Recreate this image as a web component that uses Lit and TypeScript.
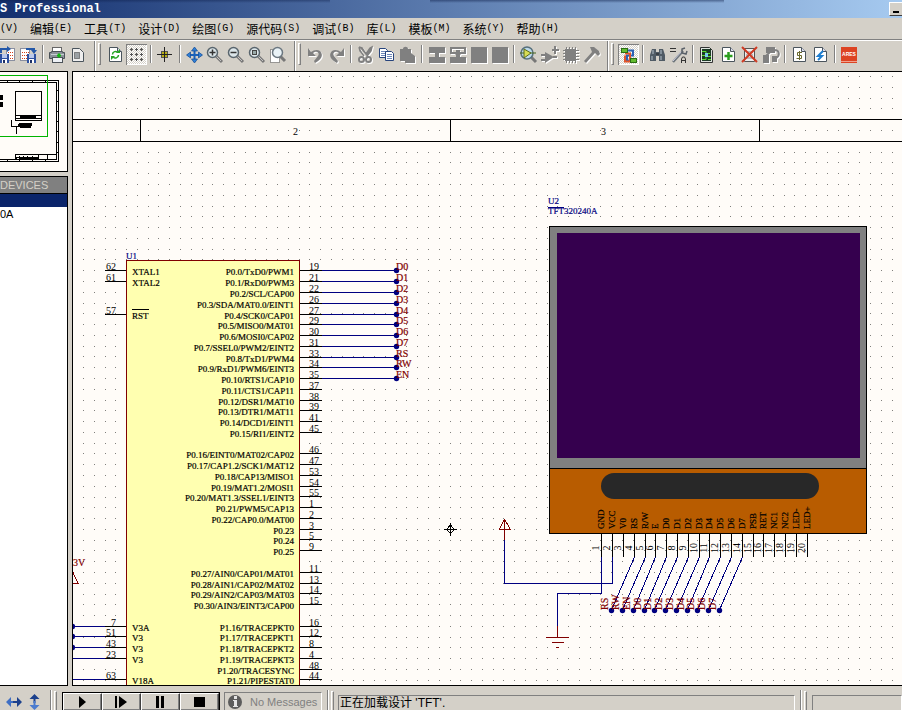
import { LitElement, html, svg, css, nothing } from "lit";
import { customElement } from "lit/decorators.js";

/* ---------- icon artwork, drawn on a 21 x 21 cell ---------- */
const floppy = (x: number, y: number) => svg`
  <rect x=${x} y=${y} width="9" height="9" fill="#2b4fa0"/>
  <rect x=${x + 2} y=${y} width="5" height="4" fill="#b9c8ea"/>
  <rect x=${x + 2} y=${y + 5} width="5" height="4" fill="#fff"/>
  <rect x=${x + 3} y=${y + 6} width="2" height="3" fill="#1d2f66"/>`;

const page = svg`<path d="M4.500 3.500h8l4 4v10h-12z" fill="#fff" stroke="#4a545c"/><path d="M12.500 3.500v4h4" fill="#dde" stroke="#4a545c"/>`;

const lens = (inner: unknown) => svg`
  <path d="M11 12l6 6" stroke="#777" stroke-width="3"/><path d="M11 12l5 5" stroke="#c4c4c4"/>
  <circle cx="7.500" cy="8.500" r="5" fill="#dce6ea" stroke="#59656d" stroke-width="1.500"/>${inner}`;

const icons: Record<string, unknown> = {
  importSection: svg`<rect x="9.500" y="4.500" width="8" height="12" fill="#fff" stroke="#8a8fa0"/>
    <path d="M11 8.500h6M11 11.500h6M11 14.500h6" stroke="#d4401c" stroke-dasharray="1 1"/>
    ${floppy(3, 10)}<path d="M4 9V5h7" fill="none" stroke="#2458a8" stroke-width="2"/><path d="M10 2l4 3-4 3z" fill="#2458a8"/>`,
  exportSection: svg`<rect x="2.500" y="4.500" width="9" height="12" fill="#fff" stroke="#8a8fa0"/>
    <path d="M4 8.500h7M4 11.500h7M4 14.500h7" stroke="#d4401c" stroke-dasharray="1 1"/>
    ${floppy(9, 10)}<path d="M8 5h8v2" fill="none" stroke="#2458a8" stroke-width="2"/><path d="M13 6h6l-3 4z" fill="#2458a8"/>`,
  print: svg`<rect x="5.500" y="3.500" width="9" height="6" fill="#fff" stroke="#666"/>
    <path d="M2.500 8.500h2v-1h11v1h2v6h-15z" fill="#8b9299" stroke="#4b5258"/><path d="M4 10.500h13" stroke="#c8ced4"/>
    <rect x="5.500" y="13.500" width="10" height="5" fill="#eef1f5" stroke="#4b5258"/><path d="M10 11.500h4M12 9.500v4" stroke="#13b513" stroke-width="2"/>`,
  area: svg`<path d="M4.500 4.500h7l4 4v9h-11z" fill="#eee" stroke="#4a545c"/><rect x="6.500" y="8.500" width="5" height="6" fill="#9aa0a4" stroke="#333" stroke-dasharray="1 1"/>`,
  redraw: svg`${page}<path d="M7.500 10.500c0-3 4-4 5-2M13.500 11c0 3-4 4-5 2" fill="none" stroke="#25a322" stroke-width="1.500"/><path d="M11 9h4V5zM10 12H6v4z" fill="#25a322"/>`,
  grid: svg`<path d="M4 5.500h3M9 5.500h3M14 5.500h3M4 10.500h3M9 10.500h3M14 10.500h3M4 15.500h3M9 15.500h3M14 15.500h3M5.500 4v3M10.500 4v3M15.500 4v3M5.500 9v3M10.500 9v3M15.500 9v3M5.500 14v3M10.500 14v3M15.500 14v3" stroke="#555"/>`,
  origin: svg`<path d="M9.500 3v15M2 10.500h15" stroke="#222"/><rect x="6.500" y="7.500" width="6" height="6" fill="#b9ae17" stroke="#555"/><path d="M9.500 7v7M6 10.500h7" stroke="#222"/>`,
  pan: svg`<path d="M10.500 4v14M3.500 11h14" stroke="#1b61b8" stroke-width="2"/><path d="M10.500 3l3 4h-6zM10.500 19l3-4h-6zM2.500 11l4-3v6zM18.500 11l-4-3v6z" fill="#2f7fd6" stroke="#154b92" stroke-width=".7"/>`,
  zoomIn: lens(svg`<path d="M4.500 8.500h6M7.500 5.500v6" stroke="#333" stroke-width="1.500"/>`),
  zoomOut: lens(svg`<path d="M4.500 8.500h6" stroke="#333" stroke-width="1.500"/>`),
  zoomAll: lens(svg`<rect x="5.500" y="6.500" width="4" height="4" fill="#9aa" stroke="#444"/>`),
  zoomArea: svg`<rect x="2.500" y="5.500" width="9" height="13" fill="#fff" stroke="#444" stroke-dasharray="1 1"/>
    <path d="M12 12l5 5" stroke="#777" stroke-width="3"/><circle cx="9.500" cy="8.500" r="5" fill="#e9f2f6" stroke="#6b7780" stroke-width="1.500"/>`,
  undo: svg`<path d="M3 4v8h8l-3-3c4-3 7 0 5 3l-4 5 1 2c8-4 8-9 5-12-3-2-6-1-9 1z" fill="#808080"/>`,
  redo: svg`<path d="M18 4v8h-8l3-3c-4-3-7 0-5 3l4 5-1 2C3 15 3 10 6 7c3-2 6-1 9 1z" fill="#808080"/>`,
  cut: svg`<path d="M4 3l3 1 4 6 4-6 2-1-1 4-4 5 1 1M4 3l1 4 4 5" fill="#808080" stroke="#808080" stroke-width="1.500"/>
    <circle cx="6.500" cy="15.500" r="2.500" fill="none" stroke="#808080" stroke-width="2"/><circle cx="13.500" cy="15.500" r="2.500" fill="none" stroke="#808080" stroke-width="2"/>`,
  copy: svg`<path d="M3.500 4.500h6l2 2v7h-8z" fill="#fff" stroke="#27447c"/><path d="M5 7.500h5M5 9.500h5M5 11.500h4" stroke="#6d87b8"/>
    <path d="M9.500 7.500h6l2 2v7h-8z" fill="#fff" stroke="#27447c"/><path d="M11 10.500h5M11 12.500h5M11 14.500h5" stroke="#6d87b8"/>`,
  paste: svg`<path d="M3 5h3c0-3 5-3 5 0h3v4l4 3v7H8v-2H3z" fill="#808080"/>`,
  blockCopy: svg`<path d="M3 3h16v6H3zM9 9h4v4H9zM3 13h16v6H3z" fill="#808080"/>`,
  blockMove: svg`<path d="M4 4h14v5H4z" fill="none" stroke="#808080" stroke-width="2"/><path d="M9 6h4v8H9zM3 13h16v6H3zM7 9h8l-4 4z" fill="#808080"/>`,
  block: svg`<rect x="3" y="3" width="16" height="16" fill="#808080"/>`,
  pick: svg`<path d="M13 13l5 5" stroke="#777" stroke-width="3"/><circle cx="9" cy="9" r="6" fill="#bcd9ea" stroke="#57707d" stroke-width="1.500"/>
    <path d="M2 9h16" stroke="#44651c"/><path d="M6 5l7 4-7 5z" fill="#d8dd55" stroke="#5b6b1b"/>`,
  makeDevice: svg`<path d="M6 8l9 5-9 6zM2 10h4v2H2zM2 15h4v2H2zM14 12h4v2h-4zM13 5h7v2h-7zM15 2h2v8h-2z" fill="#808080"/>`,
  packaging: svg`<path d="M5 5h11v12H5z" fill="#808080"/><path d="M3 6.500h16M3 9.500h16M3 12.500h16M3 15.500h16" stroke="#808080"/><path d="M6.500 3v16M9.500 3v16M12.500 3v16M15.500 3v16" stroke="#808080"/>`,
  decompose: svg`<path d="M9 3h4l5 4 1 3-2 2-3-3L5 19l-2-2 8-9z" fill="#808080"/>`,
  wires: svg`<path d="M8 6.500h7v5h-6v5h5" fill="none" stroke="#2b62b5" stroke-width="2"/><path d="M7 9.500h5v8H7v-6" fill="none" stroke="#e2552a" stroke-width="2"/>
    <rect x="3.500" y="4.500" width="6" height="4" fill="#63bd30" stroke="#2b6d14"/><rect x="12.500" y="14.500" width="6" height="4" fill="#63bd30" stroke="#2b6d14"/>`,
  search: svg`<path d="M5 5h4v3h3V5h4l2 6v6h-6v-5H9v5H3v-6z" fill="#505b65"/><path d="M6 6v4M14 6v4M5 12v4M14 12v4" stroke="#b6c3cd"/><path d="M9 10h3" stroke="#222"/>`,
  property: svg`<path d="M2 4.500h6M2 7.500h6" stroke="#333"/><path d="M5 18L15 7" stroke="#6e767c" stroke-width="2.500"/><path d="M5 17l9-10" stroke="#ccd"/>
    <path d="M17 4l-3 1v4l4 1 1-3" fill="none" stroke="#596068" stroke-width="1.500"/><path d="M13.500 19v-4l1-2h2l1 2v4M13 16.500h5" fill="none" stroke="#333"/>`,
  explorer: svg`<path d="M3.500 3.500h9l3 3v12h-12z" fill="#dfe5e0" stroke="#333"/><rect x="5" y="5" width="9" height="12" fill="#1c3a26"/><path d="M5 7.500h4v2h4M5 11.500h3M11 12.500h3M5 15.500h4v-2M11 15.500h3" fill="none" stroke="#5be02d"/><rect x="8" y="9" width="3" height="4" fill="#7ac8ee"/>`,
  newSheet: svg`${page}<path d="M10.500 8v8M6.500 12h8" stroke="#2b9e1f" stroke-width="2.500"/>`,
  removeSheet: svg`<path d="M5.500 4.500h10v13h-10z" fill="#eee" stroke="#555"/><path d="M7 8h7M7 11h7M7 14h7" stroke="#888"/><path d="M3 3l15 15M18 3L3 18" stroke="#cf3a23" stroke-width="2"/>`,
  exitParent: svg`<path d="M6 3h9v6H6zM3 11h6v8H3zM12 12h5v6h-5z" fill="#808080"/><path d="M6 12l5-5M14 6c6 0 6 6 2 8" fill="none" stroke="#808080" stroke-width="2"/>`,
  bom: svg`${page}<path d="M13 8.500H8.500v3h4v3H7.500M10.500 7v9" fill="none" stroke="#6b6a2e"/>`,
  erc: svg`${page}<path d="M13 7l-5 5h4l-4 4" fill="none" stroke="#1e7ed0" stroke-width="2"/>`,
  ares: svg`<rect x="2" y="3" width="16" height="16" fill="#dd4423"/><path d="M2 17.500h16" stroke="#f0a28f"/><text x="10" y="12" class="ares">ARES</text>`,
  flipH: svg`<path d="M3 11l5-5v4h4v2H8v4z" fill="#3f6fc4"/><path d="M19 11l-5-5v4h-4v2h4v4z" fill="#1c408c"/>`,
  flipV: svg`<path d="M10.500 3l5 5h-4v4h-2V8h-4z" fill="#1c408c"/><path d="M10.500 19l5-5h-4v-4h-2v4h-4z" fill="#4c7ccf"/>`,
  play: svg`<path d="M7 4v12l7-6z"/>`,
  step: svg`<path d="M4 4h2v12H4zM8 4v12l8-6z"/>`,
  pause: svg`<path d="M6 4h3v12H6zM11 4h3v12h-3z"/>`,
  stop: svg`<path d="M5 5h11v10H5z"/>`,
  info: svg`<circle cx="10" cy="10" r="7" fill="#5c5c5c"/><path d="M9 4h3v3H9zM8 8h4v6h1v1H8v-1h1V9H8z" fill="#e4e4e4"/>`,
};
const icon = (name: string) => html`<svg class="icon" viewBox="0 0 21 21" aria-hidden="true">${icons[name]}</svg>`;

type Tool = [name: string, label: string, state?: "off" | "on"];
const bands: Tool[][][] = [
  [
    [["importSection", "Import section"], ["exportSection", "Export section"]],
    [["print", "Print"], ["area", "Mark output area"]],
  ],
  [
    [["redraw", "Redraw"], ["grid", "Toggle grid", "on"]],
    [["origin", "Origin"]],
    [["pan", "Pan"], ["zoomIn", "Zoom in"], ["zoomOut", "Zoom out"], ["zoomAll", "Zoom all"], ["zoomArea", "Zoom area"]],
  ],
  [
    [["undo", "Undo", "off"], ["redo", "Redo", "off"]],
    [["cut", "Cut", "off"], ["copy", "Copy"], ["paste", "Paste", "off"]],
    [["blockCopy", "Block copy", "off"], ["blockMove", "Block move", "off"], ["block", "Block rotate", "off"], ["block", "Block delete", "off"]],
    [["pick", "Pick device"], ["makeDevice", "Make device", "off"], ["packaging", "Packaging tool", "off"], ["decompose", "Decompose", "off"]],
  ],
  [
    [["wires", "Wire autorouter", "on"]],
    [["search", "Search and tag"], ["property", "Property assignment"]],
    [["explorer", "Design explorer"], ["newSheet", "New sheet"], ["removeSheet", "Remove sheet"], ["exitParent", "Exit to parent", "off"]],
    [["bom", "Bill of materials"], ["erc", "Electrical rules check"]],
    [["ares", "Netlist to ARES"]],
  ],
];

const menus = [["", "V"], ["编辑", "E"], ["工具", "T"], ["设计", "D"], ["绘图", "G"], ["源代码", "S"], ["调试", "B"], ["库", "L"], ["模板", "M"], ["系统", "Y"], ["帮助", "H"]];

/* ---------- schematic data, in sheet coordinates ---------- */
const PITCH = 10.78;
const gridX = (i: number) => Math.floor(83.5 + PITCH * i);
const gridY = (i: number) => Math.floor(76.65 + PITCH * i);
const pinY = (row: number) => Math.floor(270.97 + 10.76 * row);
const FIRST_NET_COLUMN = 46;

type Pin = [row: number, num: string, name: string, net?: string];
const rightPins: Pin[] = [
  [0, "19", "P0.0/TxD0/PWM1", "D0"], [1, "21", "P0.1/RxD0/PWM3", "D1"], [2, "22", "P0.2/SCL/CAP00", "D2"],
  [3, "26", "P0.3/SDA/MAT0.0/EINT1", "D3"], [4, "27", "P0.4/SCK0/CAP01", "D4"], [5, "29", "P0.5/MISO0/MAT01", "D5"],
  [6, "30", "P0.6/MOSI0/CAP02", "D6"], [7, "31", "P0.7/SSEL0/PWM2/EINT2", "D7"], [8, "33", "P0.8/TxD1/PWM4", "RS"],
  [9, "34", "P0.9/RxD1/PWM6/EINT3", "RW"], [10, "35", "P0.10/RTS1/CAP10", "EN"], [11, "37", "P0.11/CTS1/CAP11"],
  [12, "38", "P0.12/DSR1/MAT10"], [13, "39", "P0.13/DTR1/MAT11"], [14, "41", "P0.14/DCD1/EINT1"], [15, "45", "P0.15/RI1/EINT2"],
  [17, "46", "P0.16/EINT0/MAT02/CAP02"], [18, "47", "P0.17/CAP1.2/SCK1/MAT12"], [19, "53", "P0.18/CAP13/MISO1"],
  [20, "54", "P0.19/MAT1.2/MOSI1"], [21, "55", "P0.20/MAT1.3/SSEL1/EINT3"], [22, "1", "P0.21/PWM5/CAP13"],
  [23, "2", "P0.22/CAP0.0/MAT00"], [24, "3", "P0.23"], [25, "5", "P0.24"], [26, "9", "P0.25"],
  [28, "11", "P0.27/AIN0/CAP01/MAT01"], [29, "13", "P0.28/AIN1/CAP02/MAT02"], [30, "14", "P0.29/AIN2/CAP03/MAT03"],
  [31, "15", "P0.30/AIN3/EINT3/CAP00"], [33, "16", "P1.16/TRACEPKT0"], [34, "12", "P1.17/TRACEPKT1"],
  [35, "8", "P1.18/TRACEPKT2"], [36, "4", "P1.19/TRACEPKT3"], [37, "48", "P1.20/TRACESYNC"], [38, "44", "P1.21/PIPESTAT0"],
];
const leftPins: Pin[] = [
  [0, "62", "XTAL1"], [1, "61", "XTAL2"], [4, "57", "RST"],
  [33, "7", "V3A", "dot"], [34, "51", "V3", "dot"], [35, "43", "V3", "dot"], [36, "23", "V3", "wire"], [38, "63", "V18A", "wire"],
];
const lcdPins: [x: number, name: string, net?: string][] = [
  [601, "GND"], [612, "VCC"], [623, "V0"], [634, "RS", "RS"], [645, "R/W", "RW"], [655, "E", "EN"], [666, "D0", "D0"],
  [677, "D1", "D1"], [688, "D2", "D2"], [699, "D3", "D3"], [709, "D4", "D4"], [720, "D5", "D5"], [731, "D6", "D6"],
  [742, "D7", "D7"], [753, "PSB"], [763, "RET"], [774, "NC1"], [785, "NC2"], [796, "LED-"], [807, "LED+"],
];

@customElement("schematic-sheet")
export class SchematicSheet extends LitElement {
  static styles = css`
    :host { display: block; overflow: hidden; background: #fffcf8; }
    svg { display: block; width: 100%; height: 100%; }
    .line { stroke: #000; fill: none; shape-rendering: crispEdges; }
    .wire { stroke: #000080; fill: none; shape-rendering: crispEdges; }
    .term { stroke: #800000; fill: none; shape-rendering: crispEdges; }
    .node { fill: #000080; }
    .grid { stroke: #80807c; shape-rendering: crispEdges; }
    .name { font: 9px "Liberation Serif", serif; stroke: #000; stroke-width: .2; }
    .num { font: 10px "Liberation Serif", serif; }
    .ref { font: 9px "Liberation Serif", serif; fill: #000080; stroke: #000080; stroke-width: .2; }
    .net { font: 10px "Liberation Serif", serif; fill: #800000; stroke: #800000; stroke-width: .2; }
    .end { text-anchor: end; }
    .mid { text-anchor: middle; }
    .chip { fill: #ffffb0; stroke: #800000; shape-rendering: crispEdges; }
    .bezel { fill: #808080; stroke: #000; shape-rendering: crispEdges; }
    .glass { fill: #35004e; }
    .board { fill: #b85c00; stroke: #000; shape-rendering: crispEdges; }
    .slot { fill: #282828; }
  `;

  private grid() {
    let d = "";
    for (let r = 0; r < 130; r++) {
      for (let c = 0; c < 200; c++) d += `M${gridX(c)} ${gridY(r)}.5h1`;
    }
    return svg`<path class="grid" d=${d}/>`;
  }

  private rightPin([row, num, name, net]: Pin) {
    const y = pinY(row);
    return svg`
      <path class="line" d="M300 ${y}.5h22"/>
      <text class="num" x="309" y=${y}>${num}</text>
      <text class="name end" x="294" y=${y + 5}>${name}</text>
      ${net ? svg`<path class="wire" d="M322 ${y}.5h74"/><circle class="node" cx="396.500" cy=${y + 0.5} r="2.700"/>
        <text class="net" x="396" y=${y}>${net}</text>` : nothing}`;
  }

  private leftPin([row, num, name, net]: Pin) {
    const y = pinY(row);
    return svg`
      <path class="line" d="M105 ${y}.5h21"/>
      <text class="num end" x="116" y=${y}>${num}</text>
      <text class="name" x="132" y=${y + 5}>${name}</text>
      ${name === "RST" ? svg`<path class="line" d="M132 ${y - 5}.5h17"/>` : nothing}
      ${net ? svg`<path class="wire" d="M73 ${y}.5h32"/>` : nothing}
      ${net === "dot" ? svg`<circle class="node" cx="72.500" cy=${y + 0.5} r="2.700"/>` : nothing}`;
  }

  private lcdPin([x, name, net]: [number, string, string?], i: number) {
    const nx = gridX(FIRST_NET_COLUMN + i);
    return svg`
      <path class="line" d="M${x}.5 534v23"/>
      <text class="name" transform="translate(${x + 3} 529) rotate(-90)">${name}</text>
      <text class="num mid" transform="translate(${x - 2} 548) rotate(-90)">${i + 1}</text>
      ${net ? svg`<path class="wire" d="M${x}.5 557L${nx}.5 610"/><circle class="node" cx=${nx + 0.5} cy="610.500" r="2.700"/>
        <text class="net" transform="translate(${nx - 3} 610) rotate(-90)">${net}</text>` : nothing}`;
  }

  render() {
    return html`<svg role="img" aria-label="Schematic"><g transform="translate(-73 -72)">
      ${this.grid()}
      <path class="line" d="M73 119.500h2000M73 141.500h2000M140.500 120v21M450.500 120v21M759.500 120v21"/>
      <text class="num" x="293" y="135">2</text><text class="num" x="601" y="135">3</text>

      <text class="ref" x="126" y="259">U1</text>
      <rect class="chip" x="126.500" y="260.500" width="173" height="900"/>
      ${rightPins.map((p) => this.rightPin(p))}
      ${leftPins.map((p) => this.leftPin(p))}
      <text class="net" x="73" y="566">3V</text><path class="term" d="M73 572.500l5 11h-6"/>

      <text class="ref" x="548" y="204">U2</text><path class="wire" d="M548 207.500h16"/>
      <text class="ref" x="548" y="214">TFT320240A</text>
      <rect class="bezel" x="549.500" y="226.500" width="317" height="242"/>
      <rect class="glass" x="557" y="233" width="303" height="225"/>
      <rect class="board" x="549.500" y="468.500" width="317" height="65"/>
      <rect class="slot" x="601" y="473" width="218" height="26" rx="13"/>
      ${lcdPins.map((p, i) => this.lcdPin(p, i))}

      <path class="wire" d="M612.500 557v26.500H504.500V540M601.500 557v36.500H557.500V626"/>
      <path class="term" d="M504.500 540V519l-5 10.500h11L504.500 519M557.500 626v11M546 637.500h23M552 642.500h12M556 647.500h3"/>
      <path class="line" d="M444 529.500h13M450.500 523v13M450.500 525l4 4.500-4 4-4-4z"/>
    </g></svg>`;
  }
}

@customElement("sheet-overview")
export class SheetOverview extends LitElement {
  static styles = css`
    :host { display: block; background: #fffcf8; }
    svg { display: block; width: 67px; height: 99px; shape-rendering: crispEdges; }
    .k { fill: none; stroke: #000; }
    .v { fill: none; stroke: #00b400; }
  `;
  render() {
    return html`<svg role="img" aria-label="Sheet overview">
      <path class="k" d="M0 8.500h58.500v81H0M0 10.500h56.500v77H0"/>
      <path class="k" d="M7.500 8v2M19.500 8v2M32.500 8v2M45.500 8v2M7.500 88v2M19.500 88v2M32.500 88v2M45.500 88v2M56 18.500h2M56 29.500h2M56 39.500h2M56 49.500h2M56 59.500h2M56 70.500h2M56 80.500h2"/>
      <path d="M0 23h3v5H0zM0 30h3v5H0zM19 51h13v3h-1v2h-11v-2h-2v-2h1z"/>
      <path class="k" d="M15.500 19.500h26v29h-26zM15.500 43.500h26M15.500 46.500h26M11.500 48v6h9M16.500 54v7h-1M15 82.500h41M15 85.500h24M15.500 82v6M38.500 82v6M19.500 84v4M23.500 84v4M27.500 84v4M32.500 84v4M47.500 82v5"/>
      <path d="M15 86h2v2h-2zM20 86h18v2H20zM20 44h16v2H20z"/>
      <path class="v" d="M0 3.500h47.500v61H0"/>
    </svg>`;
  }
}

@customElement("app-root")
export class AppRoot extends LitElement {
  static styles = css`
    :host {
      display: flex; flex-direction: column; height: 100vh; overflow: hidden; background: #d4d0c8; color: #000;
      font: 12px/14px "Liberation Sans", "Noto Sans CJK SC", sans-serif;
    }
    button { font: inherit; color: inherit; background: none; border: 0; padding: 0; margin: 0; display: flex; align-items: center; justify-content: center; flex: none; }
    .icon { width: 21px; height: 21px; display: block; }

    .title {
      display: flex; justify-content: space-between; align-items: center; height: 18px; color: #fff;
      background: linear-gradient(#0a1a4466, #0a1a4400) 0 0 / 330px 3px no-repeat,
        linear-gradient(#0a1a4477, #0a1a4400) 430px 0 / 294px 3px no-repeat,
        linear-gradient(90deg, #14306f, #a6caf0);
    }
    .title h1 { margin: 0; font: bold 12px/18px "Liberation Mono", monospace; white-space: pre; }
    .min { width: 16px; height: 14px; margin-right: -3px; background: #d4d0c8; border: 1px solid; border-color: #fff #404040 #404040 #fff; }
    .min::after { content: ""; width: 6px; height: 2px; margin-top: 6px; margin-right: 3px; background: #000; }

    .menu { display: flex; gap: 12px; height: 21px; align-items: center; font-family: "Noto Sans CJK SC", sans-serif; }
    .key { font: 10px/14px "Liberation Mono", monospace; }

    .tools { display: flex; height: 30px; border-top: 1px solid #808080; box-shadow: inset 0 1px #fff; overflow: hidden; padding-top: 1px; }
    .band { display: flex; align-items: center; flex: none; padding: 0 5px 4px 0; border-right: 1px solid #808080; box-shadow: 1px 0 #fff; margin-right: 3px; }
    .band:first-child { margin-left: -3px; }
    .band:last-child { border: 0; box-shadow: none; }
    .grip { width: 3px; height: 22px; margin-right: 4px; box-sizing: border-box; border: 1px solid; border-color: #fff #808080 #808080 #fff; }
    .sep { width: 8px; height: 18px; flex: none; background: linear-gradient(90deg, #808080 50%, #fff 50%) center / 2px 100% no-repeat; }
    .off .icon { filter: drop-shadow(1px 1px 0 #fff); }
    .on { box-shadow: inset 1px 1px #808080, inset -1px -1px #fff; background: repeating-conic-gradient(#fff 0 25%, #d4d0c8 0 50%) 0 0 / 2px 2px; }
    .ares { font: bold 5px "Liberation Sans", sans-serif; fill: #fff; text-anchor: middle; }

    .work { flex: 1; min-height: 0; display: flex; gap: 4px; }
    .side { width: 68px; flex: none; display: flex; flex-direction: column; gap: 4px; }
    sheet-overview, .devices { border: solid #000; border-width: 1px 1px 1px 0; }
    .devices { flex: 1; min-height: 0; background: #fff; }
    .devices h2 { margin: 0; font: 11px/16px "Liberation Sans", sans-serif; color: #d4d0c8; background: #808080; border-bottom: 1px solid #000; }
    .devices ul { list-style: none; margin: 0; padding: 0; }
    .devices li { font-size: 11px; line-height: 14px; height: 13px; }
    .devices .sel { background: #0a246a; }
    schematic-sheet { flex: 1; min-width: 0; border: solid #000; border-width: 1px 0 1px 1px; }

    .status { display: flex; height: 24px; overflow: hidden; box-sizing: border-box; padding: 4px 0 0 3px; }
    .turn { width: 21px; height: 22px; }
    .rule { width: 2px; margin: 0 2px 0 5px; background: linear-gradient(90deg, #808080 50%, #fff 50%); flex: none; }
    .status .grip { height: 30px; margin: 1px 5px 0 0; flex: none; }
    .run { display: flex; height: 18px; margin-top: 2px; border: 1px solid #000; flex: none; }
    .run button { width: 39px; height: 18px; box-sizing: border-box; border: 1px solid; border-color: #fff #404040 #404040 #fff; box-shadow: inset -1px -1px #808080; }
    .field { box-sizing: border-box; height: 22px; border: 1px solid; border-color: #808080 #fff #fff #808080; display: flex; }
    .msg { width: 98px; margin: 2px 0 0 4px; color: #808080; flex: none; gap: 4px; font-size: 11px; line-height: 19px; white-space: nowrap; }
    .msg .icon { margin-top: -1px; flex: none; }
    .load { flex: 1; margin: 5px 0 0 -1px; padding-left: 1px; line-height: 15px; white-space: nowrap; }
    .coord { width: 90px; margin-top: 5px; flex: none; }
  `;

  render() {
    return html`
      <header class="title"><h1>S Professional</h1><button class="min" aria-label="Minimize"></button></header>
      <nav class="menu">${menus.map(([t, k]) => html`<button>${t}<span class="key">(${k})</span></button>`)}</nav>
      <div class="tools" role="toolbar">
        ${bands.map((groups, b) => html`<div class="band">
          ${b ? html`<span class="grip"></span>` : nothing}
          ${groups.map((tools, g) => html`${g ? html`<span class="sep"></span>` : nothing}${tools.map(
            ([name, label, state]) => html`<button class=${state ?? ""} aria-label=${label} ?disabled=${state === "off"}>${icon(name)}</button>`,
          )}`)}
        </div>`)}
      </div>
      <main class="work">
        <aside class="side">
          <sheet-overview></sheet-overview>
          <section class="devices"><h2>DEVICES</h2><ul><li class="sel"></li><li>0A</li></ul></section>
        </aside>
        <schematic-sheet></schematic-sheet>
      </main>
      <footer class="status">
        <button class="turn" aria-label="Mirror horizontally">${icon("flipH")}</button>
        <button class="turn" aria-label="Mirror vertically">${icon("flipV")}</button>
        <span class="rule"></span><span class="grip"></span>
        <div class="run">${["play", "step", "pause", "stop"].map((n) => html`<button aria-label=${n}>${icon(n)}</button>`)}</div>
        <div class="field msg">${icon("info")}<span>No Messages</span></div>
        <span class="rule"></span><span class="grip"></span>
        <div class="field load" role="status">正在加载设计 'TFT'.</div>
        <span class="rule"></span><span class="grip"></span>
        <div class="field coord"></div>
      </footer>`;
  }
}
